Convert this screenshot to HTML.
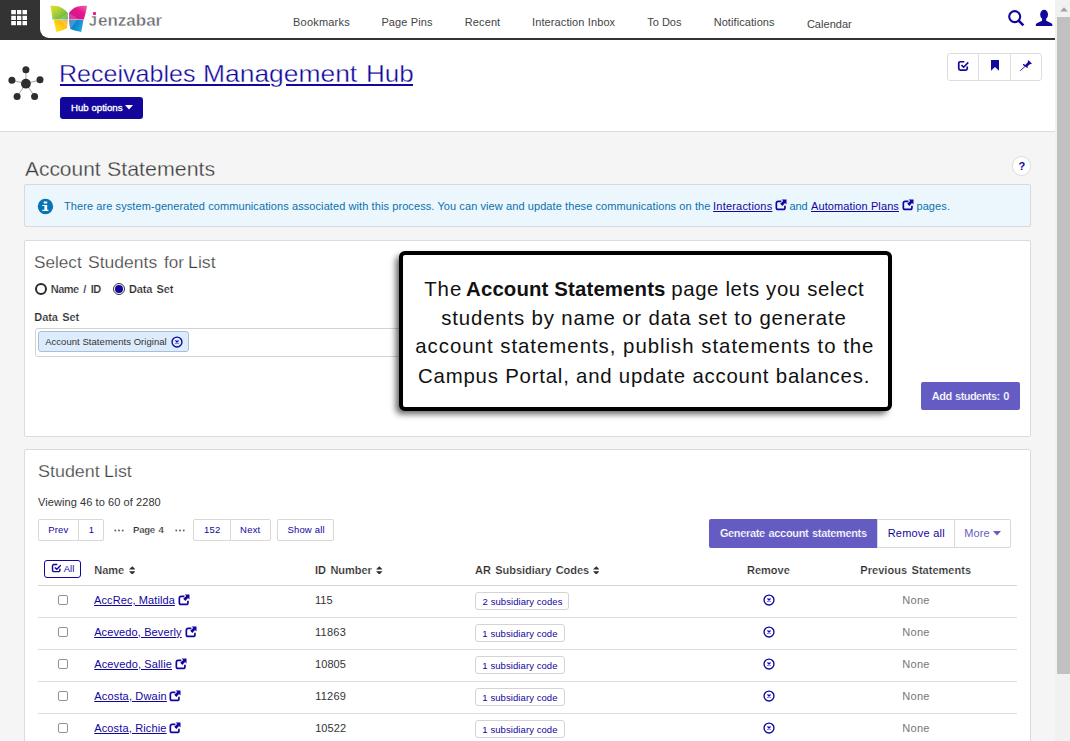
<!DOCTYPE html>
<html>
<head>
<meta charset="utf-8">
<title>Receivables Management Hub</title>
<style>
*{box-sizing:border-box;margin:0;padding:0}
html,body{width:1070px;height:741px;overflow:hidden;background:#f5f5f5;font-family:"Liberation Sans",sans-serif;color:#333}
.abs{position:absolute}
.t{position:absolute;white-space:nowrap;line-height:1}
#page{position:relative;width:1070px;height:741px;overflow:hidden;background:#f5f5f5}
#hdr{left:0;top:0;width:1055px;height:40px;background:#333}
#hdrw{left:40px;top:0;width:1015px;height:38px;background:#fff;border-bottom-left-radius:9px}
#hub{left:0;top:40px;width:1055px;height:92px;background:#fff;border-bottom:1px solid #dcdcdc}
#hubbtn{left:60px;top:97px;width:83px;height:22px;background:#12069d;border-radius:3px}
#sb{left:1055px;top:0;width:15px;height:741px;background:#f1f1f1}
#sbt{left:1057px;top:17px;width:13px;height:657px;background:#c1c1c1}
.panel{background:#fff;border:1px solid #dbdbdb;border-radius:2px}
#info{left:24px;top:184px;width:1007px;height:43px;background:#ebf7fd;border:1px solid #d9d9d9;border-radius:2px}
#p1{left:24px;top:240px;width:1007px;height:197px}
#p2{left:24px;top:449px;width:1007px;height:320px}
.btn{position:absolute;background:#fff;border:1px solid #d8d8d8}
.rowline{position:absolute;left:38px;width:979px;height:1px;background:#dedede}
.sub{position:absolute;left:475px;height:17.5px;border:1px solid #d4d4d4;border-radius:3px;background:#fff}
.cb{position:absolute;left:58px;width:9.9px;height:9.9px;border:1px solid #929292;border-radius:2px;background:#fff}
</style>
</head>
<body>
<div id="page">
<svg width="0" height="0" style="position:absolute">
<defs>
 <symbol id="ext" viewBox="0 0 12 12">
  <path d="M6.4 2.45H3.05A1.7 1.7 0 0 0 1.35 4.15V8.75A1.7 1.7 0 0 0 3.05 10.45H8.25A1.7 1.7 0 0 0 9.95 8.75V6.7" fill="none" stroke="#12069d" stroke-width="1.7"/>
  <path d="M6.6 0.5H11.5V5.4L10 3.9L7.4 6.9L5.2 4.8L8.2 2z" fill="#12069d"/>
 </symbol>
 <symbol id="xc" viewBox="0 0 12 12">
  <circle cx="6" cy="6" r="4.95" fill="none" stroke="#12069d" stroke-width="1.35"/>
  <path d="M4.5 4.5L7.5 7.5M7.5 4.5L4.5 7.5" stroke="#12069d" stroke-width="1.2"/>
 </symbol>
 <symbol id="chk" viewBox="0 0 12 11">
  <path d="M7.3 1.75H3.35A1.6 1.6 0 0 0 1.75 3.35V8.45A1.6 1.6 0 0 0 3.35 10.05H8.65A1.6 1.6 0 0 0 10.25 8.45V6.6" fill="none" stroke="#12069d" stroke-width="1.7"/>
  <path d="M4.4 5.1L6.7 7.2L11.3 2.4" fill="none" stroke="#12069d" stroke-width="1.6"/>
 </symbol>
 <symbol id="sort" viewBox="0 0 7 9">
  <path d="M3.5 0L7 3.6H0z M3.5 9L7 5.4H0z" fill="#2e2e2e"/>
 </symbol>
</defs>
</svg>

<!-- HEADER -->
<div id="hdr" class="abs"></div>
<div id="hdrw" class="abs"></div>
<svg class="abs" style="left:11px;top:10px" width="17" height="16" viewBox="0 0 17 16">
 <g fill="#fff">
 <rect x="0.2" y="0" width="4.7" height="4.3"/><rect x="6" y="0" width="4.3" height="4.3"/><rect x="11.5" y="0" width="4.5" height="4.3"/>
 <rect x="0.2" y="5.8" width="4.7" height="4.2"/><rect x="6" y="5.8" width="4.3" height="4.2"/><rect x="11.5" y="5.8" width="4.5" height="4.2"/>
 <rect x="0.2" y="11" width="4.7" height="4.2"/><rect x="6" y="11" width="4.3" height="4.2"/><rect x="11.5" y="11" width="4.5" height="4.2"/>
 </g>
</svg>
<svg class="abs" style="left:48px;top:3px" width="42" height="32" viewBox="0 0 42 32">
 <defs>
  <linearGradient id="g1" x1="0" y1="0" x2="1" y2="1"><stop offset="0" stop-color="#e6e32a"/><stop offset="0.45" stop-color="#a6ce39"/><stop offset="1" stop-color="#4aa94a"/></linearGradient>
  <linearGradient id="g2" x1="0" y1="1" x2="1" y2="0"><stop offset="0" stop-color="#c2188a"/><stop offset="0.6" stop-color="#e5168c"/><stop offset="1" stop-color="#f06ab0"/></linearGradient>
  <linearGradient id="g3" x1="1" y1="0" x2="0.1" y2="0.9"><stop offset="0" stop-color="#f59a1c"/><stop offset="0.45" stop-color="#fdc413"/><stop offset="1" stop-color="#fde61c"/></linearGradient>
  <linearGradient id="g4" x1="0" y1="0" x2="1" y2="0.4"><stop offset="0" stop-color="#2464ae"/><stop offset="0.5" stop-color="#0a88cc"/><stop offset="1" stop-color="#1ea3dc"/></linearGradient>
 </defs>
 <path d="M2.2,2.9 C5,2.6 9,3 11.6,3.8 C15,5 18,7.5 19.9,10.1 L19.9,16.4 L4.4,16.4 C4.2,12 3.4,7 2.2,2.9z" fill="url(#g1)"/>
 <path d="M39.1,2.9 C36,2.6 32,3 29.9,3.5 C26,4.6 23,7 21,10.1 L21,16.4 L35.8,16.4 C37.2,12 38.4,7 39.1,2.9z" fill="url(#g2)"/>
 <path d="M5.7,17 L19.7,17 L19.1,25.1 C16,27 12,28.3 8.4,29 C7.6,25 6.6,21 5.7,17z" fill="url(#g3)"/>
 <path d="M21,17 L35.4,17 C34.8,21 34,25 33.2,29 C29,28.2 25,27.2 22.4,26 C21.6,23 21.2,20 21,17z" fill="url(#g4)"/>
 <path d="M19.9,10.1 L19.9,16.4 L10,16.4z" fill="#fff" opacity="0.18"/>
 <path d="M21,10.1 L21,16.4 L31,16.4z" fill="#fff" opacity="0.18"/>
 <path d="M19.7,17 L19.1,25.1 L12,17z" fill="#fff" opacity="0.22"/>
 <path d="M21,17 L22.4,26 L29,17z" fill="#fff" opacity="0.22"/>
</svg>
<div class="abs" style="left:93.3px;top:12.4px;width:2.8px;height:2.5px;background:#e5168c;border-radius:1px"></div>
<svg class="abs" style="left:1007px;top:8px" width="19" height="20" viewBox="0 0 19 20">
 <circle cx="7.7" cy="8.6" r="5.5" fill="none" stroke="#12069d" stroke-width="2.1"/>
 <path d="M11.7 12.7L16.4 17.4" stroke="#12069d" stroke-width="2.6"/>
</svg>
<svg class="abs" style="left:1035px;top:9px" width="18" height="18" viewBox="0 0 18 18">
 <ellipse cx="9.1" cy="5.6" rx="3.9" ry="4.9" fill="#12069d"/>
 <path d="M7 9.5h4.2v2.2l5.2 2.6c0.6 0.3 1 0.9 1 1.6v1.1H0.8v-1.1c0-0.7 0.4-1.3 1-1.6L7 11.7z" fill="#12069d"/>
</svg>

<!-- HUB -->
<div id="hub" class="abs"></div>
<svg class="abs" style="left:6px;top:64px" width="40" height="38" viewBox="0 0 40 38">
 <g stroke="#555" stroke-width="0.55">
  <line x1="19.9" y1="19.7" x2="19.9" y2="5.7"/><line x1="19.9" y1="19.7" x2="5.9" y2="16.2"/><line x1="19.9" y1="19.7" x2="34" y2="15.8"/>
  <line x1="19.9" y1="19.7" x2="11.1" y2="32.6"/><line x1="19.9" y1="19.7" x2="28.6" y2="32.4"/>
 </g>
 <g fill="#2e2e2e">
  <circle cx="19.9" cy="19.7" r="4.9"/><circle cx="19.9" cy="5.7" r="3.5"/><circle cx="5.9" cy="16.2" r="3.5"/>
  <circle cx="34" cy="15.8" r="3.5"/><circle cx="11.1" cy="32.6" r="3.5"/><circle cx="28.6" cy="32.4" r="3.5"/>
 </g>
</svg>
<div id="hubbtn" class="abs"></div>
<div class="abs" style="left:59.8px;top:84px;width:210.2px;height:1.9px;background:#12069d"></div>
<div class="abs" style="left:286px;top:84px;width:127.2px;height:1.9px;background:#12069d"></div>
<svg class="abs" style="left:124.5px;top:104.8px" width="8" height="5" viewBox="0 0 8 5"><path d="M0 0H8L4 4.6z" fill="#fff"/></svg>
<div class="abs" style="left:947px;top:53px;width:95px;height:28px;border:1px solid #ddd;border-radius:3px;background:#fff"></div>
<div class="abs" style="left:978px;top:53px;width:1px;height:28px;background:#ddd"></div>
<div class="abs" style="left:1010px;top:53px;width:1px;height:28px;background:#ddd"></div>
<svg class="abs" style="left:956.5px;top:60px" width="12" height="11"><use href="#chk"/></svg>
<svg class="abs" style="left:990px;top:60px" width="10" height="11" viewBox="0 0 10 11"><path d="M1 0H9V10.8L5 7.1L1 10.8z" fill="#12069d"/></svg>
<svg class="abs" style="left:1019px;top:59px" width="14" height="13" viewBox="0 0 14 13">
 <path d="M1.2 11.7L7 6.6" stroke="#12069d" stroke-width="0.9"/>
 <path d="M4.1 5.4L8.8 8.5" stroke="#12069d" stroke-width="1.3"/>
 <path d="M6.2 5.9L9 3L8.7 2L9.6 1.2L12.8 4.4L12.1 5.2L11.1 5L8 7.8z" fill="#12069d"/>
</svg>

<!-- ACCOUNT STATEMENTS -->
<div class="abs" style="left:1012px;top:156px;width:18.9px;height:19.6px;border-radius:10px;border:1px solid #ddd;background:#fff"></div>
<div id="info" class="abs"></div>
<svg class="abs" style="left:37.3px;top:198.4px" width="17" height="17" viewBox="0 0 17 17"><circle cx="8.45" cy="8.5" r="7.7" fill="#0574b3"/><path d="M6.7 3.6h3.5v1.8H6.7z M5.3 6.9h4.9v4.9h1.2v1.1H5.3v-1.1h2.1V8.1H5.3z" fill="#fff"/></svg>
<svg class="abs" style="left:774.8px;top:198.5px" width="12" height="12"><use href="#ext"/></svg>
<svg class="abs" style="left:901.8px;top:198.5px" width="12" height="12"><use href="#ext"/></svg>

<!-- PANEL 1 -->
<div id="p1" class="abs panel"></div>
<div class="abs" style="left:34.8px;top:283.3px;width:11.8px;height:11.8px;border-radius:6px;border:2px solid #2b2b2b;background:#fff"></div>
<div class="abs" style="left:112.9px;top:283.3px;width:11.8px;height:11.8px;border-radius:6px;border:1.9px solid #333;background:#fff"></div>
<div class="abs" style="left:115px;top:285.4px;width:7.6px;height:7.6px;border-radius:4px;background:#12069d"></div>
<div class="abs" style="left:35px;top:327.5px;width:500px;height:29.5px;border:1px solid #d2d2d2;border-radius:3px;background:#fff"></div>
<div class="abs" style="left:38.3px;top:331px;width:150.7px;height:21px;border:1px solid #a9bfd5;border-radius:3px;background:#dcecfc"></div>
<svg class="abs" style="left:171px;top:335.9px" width="12" height="12"><use href="#xc"/></svg>
<div class="abs" style="left:921px;top:382px;width:99px;height:28px;background:#645cc3;border-radius:2px"></div>

<!-- CALLOUT -->
<div class="abs" style="left:399.2px;top:251px;width:492.8px;height:160px;border:4px solid #000;border-radius:6px;background:#fff;box-shadow:-4px 4px 6px -1px rgba(0,0,0,0.62)"></div>

<!-- PANEL 2 -->
<div id="p2" class="abs panel"></div>
<div class="btn" style="left:38px;top:519px;width:41px;height:22px;border-radius:2px 0 0 2px"></div>
<div class="btn" style="left:78px;top:519px;width:26px;height:22px;border-radius:0 2px 2px 0"></div>
<div class="btn" style="left:193px;top:519px;width:38px;height:22px;border-radius:2px 0 0 2px"></div>
<div class="btn" style="left:230px;top:519px;width:41px;height:22px;border-radius:0 2px 2px 0"></div>
<div class="btn" style="left:277px;top:519px;width:57px;height:22px;border-radius:2px"></div>
<svg class="abs" style="left:114.3px;top:528.9px" width="10" height="3" viewBox="0 0 10 3"><g fill="#666"><circle cx="1.3" cy="1.5" r="1"/><circle cx="5" cy="1.5" r="1"/><circle cx="8.7" cy="1.5" r="1"/></g></svg>
<svg class="abs" style="left:175.4px;top:528.9px" width="10" height="3" viewBox="0 0 10 3"><g fill="#666"><circle cx="1.3" cy="1.5" r="1"/><circle cx="5" cy="1.5" r="1"/><circle cx="8.7" cy="1.5" r="1"/></g></svg>
<div class="abs" style="left:709px;top:519px;width:168px;height:29px;background:#645cc3;border-radius:2px 0 0 2px"></div>
<div class="btn" style="left:877px;top:519px;width:78px;height:29px"></div>
<div class="btn" style="left:954px;top:519px;width:57px;height:29px;border-radius:0 2px 2px 0"></div>
<svg class="abs" style="left:992.5px;top:530.5px" width="8" height="5" viewBox="0 0 8 5"><path d="M0 0H8L4 4.4z" fill="#645cc3"/></svg>
<div class="abs" style="left:44px;top:560px;width:37px;height:18px;border:1.2px solid #12069d;border-radius:3px;background:#fff"></div>
<svg class="abs" style="left:51.1px;top:563.3px" width="10.4" height="9.6" viewBox="0 0 12 11"><use href="#chk"/></svg>
<svg class="abs" style="left:128.8px;top:565.6px" width="6.6" height="8.8"><use href="#sort"/></svg>
<svg class="abs" style="left:376px;top:565.6px" width="6.6" height="8.8"><use href="#sort"/></svg>
<svg class="abs" style="left:592.6px;top:565.6px" width="6.6" height="8.8"><use href="#sort"/></svg>
<div class="rowline" style="top:585px;height:1px;background:#d6d6d6"></div>
<div class="cb" style="top:595px"></div>
<svg class="abs" style="left:178.2px;top:593.5px" width="12" height="12"><use href="#ext"/></svg>
<div class="sub" style="top:592.4px;width:93.5px"></div>
<svg class="abs" style="left:763px;top:593.8px" width="12" height="12"><use href="#xc"/></svg>
<div class="rowline" style="top:617px"></div>
<div class="cb" style="top:627px"></div>
<svg class="abs" style="left:185.0px;top:625.5px" width="12" height="12"><use href="#ext"/></svg>
<div class="sub" style="top:624.4px;width:89.7px"></div>
<svg class="abs" style="left:763px;top:625.8px" width="12" height="12"><use href="#xc"/></svg>
<div class="rowline" style="top:649px"></div>
<div class="cb" style="top:659px"></div>
<svg class="abs" style="left:174.9px;top:657.5px" width="12" height="12"><use href="#ext"/></svg>
<div class="sub" style="top:656.4px;width:89.7px"></div>
<svg class="abs" style="left:763px;top:657.8px" width="12" height="12"><use href="#xc"/></svg>
<div class="rowline" style="top:681px"></div>
<div class="cb" style="top:691px"></div>
<svg class="abs" style="left:169.4px;top:689.5px" width="12" height="12"><use href="#ext"/></svg>
<div class="sub" style="top:688.4px;width:89.7px"></div>
<svg class="abs" style="left:763px;top:689.8px" width="12" height="12"><use href="#xc"/></svg>
<div class="rowline" style="top:713px"></div>
<div class="cb" style="top:723px"></div>
<svg class="abs" style="left:169.4px;top:721.5px" width="12" height="12"><use href="#ext"/></svg>
<div class="sub" style="top:720.4px;width:89.7px"></div>
<svg class="abs" style="left:763px;top:721.8px" width="12" height="12"><use href="#xc"/></svg>

<!-- TEXT -->
<div class="t" id="n1" style="left:293.04px;top:16.69px;font-size:11px;color:#444;letter-spacing:0.198px">Bookmarks</div>
<div class="t" id="n2" style="left:381.40px;top:16.69px;font-size:11px;color:#444;letter-spacing:0.124px">Page Pins</div>
<div class="t" id="n3" style="left:464.79px;top:16.69px;font-size:11px;color:#444;letter-spacing:0.104px">Recent</div>
<div class="t" id="n4" style="left:531.99px;top:16.69px;font-size:11px;color:#444;letter-spacing:0.112px">Interaction Inbox</div>
<div class="t" id="n5" style="left:647.24px;top:16.69px;font-size:11px;color:#444;letter-spacing:0.004px">To Dos</div>
<div class="t" id="n6" style="left:713.65px;top:16.69px;font-size:11px;color:#444;letter-spacing:0.083px">Notifications</div>
<div class="t" id="n7" style="left:806.89px;top:18.69px;font-size:11px;color:#444;letter-spacing:0.035px">Calendar</div>
<div class="t" id="jzJ" style="left:88.77px;top:14.47px;font-size:14.8px;color:#6b6c70;font-weight:bold;transform-origin:0 0;transform:scaleX(0.9506);-webkit-text-stroke:0.3px #fff">J</div>
<div class="t" id="jz" style="left:97.53px;top:12.78px;font-size:16.8px;color:#6b6c70;font-weight:bold;transform-origin:0 0;transform:scaleX(1.0127);-webkit-text-stroke:0.35px #fff">enzabar</div>
<div class="t" id="ti1" style="left:59.27px;top:61.68px;font-size:24px;color:#12069d;transform-origin:0 0;transform:scaleX(1.0438);-webkit-text-stroke:0.35px #fff">Receivables</div>
<div class="t" id="ti2" style="left:203.03px;top:61.68px;font-size:24px;color:#12069d;transform-origin:0 0;transform:scaleX(1.1005);-webkit-text-stroke:0.35px #fff">Management</div>
<div class="t" id="ti3" style="left:365.78px;top:61.68px;font-size:24px;color:#12069d;transform-origin:0 0;transform:scaleX(1.0850);-webkit-text-stroke:0.35px #fff">Hub</div>
<div class="t" id="hubopt" style="left:70.66px;top:104.15px;font-size:8.8px;color:#fff;transform-origin:0 0;transform:scaleX(1.0979);-webkit-text-stroke:0.3px #fff">Hub options</div>
<div class="t" id="h2a" style="left:24.70px;top:158.02px;font-size:21px;color:#3c3c3c;transform-origin:0 0;transform:scaleX(0.9962);-webkit-text-stroke:0.3px #f5f5f5">Account</div>
<div class="t" id="h2b" style="left:106.86px;top:158.02px;font-size:21px;color:#3c3c3c;transform-origin:0 0;transform:scaleX(1.0189);-webkit-text-stroke:0.3px #f5f5f5">Statements</div>
<div class="t" id="q" style="left:1018.50px;top:160.69px;font-size:11px;color:#12069d;font-weight:bold">?</div>
<div class="t" id="i1" style="left:63.98px;top:200.79px;font-size:11px;color:#0b70ae;letter-spacing:0.086px">There are system-generated communications associated with this process. You can view and update these communications on the</div>
<div class="t" id="i2" style="left:713.10px;top:200.79px;font-size:11px;color:#12069d;letter-spacing:0.200px;text-decoration:underline">Interactions</div>
<div class="t" id="i3" style="left:789.51px;top:200.79px;font-size:11px;color:#0b70ae;letter-spacing:-0.112px">and</div>
<div class="t" id="i4" style="left:810.97px;top:200.79px;font-size:11px;color:#12069d;letter-spacing:0.112px;text-decoration:underline">Automation Plans</div>
<div class="t" id="i5" style="left:916.42px;top:200.79px;font-size:11px;color:#0b70ae;letter-spacing:0.108px">pages.</div>
<div class="t" id="h3a1" style="left:34.45px;top:254.03px;font-size:16.5px;color:#3c3c3c;transform-origin:0 0;transform:scaleX(1.0403);-webkit-text-stroke:0.25px #fff">Select</div>
<div class="t" id="h3a2" style="left:88.11px;top:254.03px;font-size:16.5px;color:#3c3c3c;transform-origin:0 0;transform:scaleX(1.0628);-webkit-text-stroke:0.25px #fff">Students</div>
<div class="t" id="h3a3" style="left:163.56px;top:254.03px;font-size:16.5px;color:#3c3c3c;transform-origin:0 0;transform:scaleX(1.0343);-webkit-text-stroke:0.25px #fff">for</div>
<div class="t" id="h3a4" style="left:188.10px;top:254.03px;font-size:16.5px;color:#3c3c3c;transform-origin:0 0;transform:scaleX(1.0769);-webkit-text-stroke:0.25px #fff">List</div>
<div class="t" id="r1" style="left:50.81px;top:283.79px;font-size:11px;color:#2a2a2a;font-weight:bold;letter-spacing:-0.557px;word-spacing:2.3px;-webkit-text-stroke:0.2px #fff">Name / ID</div>
<div class="t" id="r2" style="left:128.96px;top:283.79px;font-size:11px;color:#2a2a2a;font-weight:bold;letter-spacing:-0.150px;word-spacing:1.4px;-webkit-text-stroke:0.2px #fff">Data Set</div>
<div class="t" id="ds" style="left:34.34px;top:311.89px;font-size:11px;color:#2a2a2a;font-weight:bold;letter-spacing:-0.073px;word-spacing:1.4px;-webkit-text-stroke:0.2px #fff">Data Set</div>
<div class="t" id="tag" style="left:45.15px;top:336.96px;font-size:9.5px;color:#333;letter-spacing:0.046px">Account Statements Original</div>
<div class="t" id="addst" style="left:931.85px;top:390.69px;font-size:11px;color:#fff;font-weight:bold;letter-spacing:-0.548px;word-spacing:1px;-webkit-text-stroke:0.2px #645cc3">Add students: 0</div>
<div class="t" id="co1a" style="left:424.20px;top:278.63px;font-size:20.4px;color:#111;letter-spacing:0.972px">The</div>
<div class="t" id="co1b" style="left:466.05px;top:278.63px;font-size:20.4px;color:#111;font-weight:bold;letter-spacing:0.132px">Account Statements</div>
<div class="t" id="co1c" style="left:671.17px;top:278.63px;font-size:20.4px;color:#111;letter-spacing:0.646px">page lets you select</div>
<div class="t" id="co2" style="left:441.30px;top:308.33px;font-size:20.4px;color:#111;letter-spacing:0.837px">students by name or data set to generate</div>
<div class="t" id="co3" style="left:415.24px;top:336.03px;font-size:20.4px;color:#111;letter-spacing:0.986px">account statements, publish statements to the</div>
<div class="t" id="co4" style="left:418.08px;top:366.33px;font-size:20.4px;color:#111;letter-spacing:0.785px">Campus Portal, and update account balances.</div>
<div class="t" id="h3b1" style="left:37.54px;top:463.33px;font-size:16.5px;color:#3c3c3c;transform-origin:0 0;transform:scaleX(1.0860);-webkit-text-stroke:0.25px #fff">Student</div>
<div class="t" id="h3b2" style="left:104.06px;top:463.33px;font-size:16.5px;color:#3c3c3c;transform-origin:0 0;transform:scaleX(1.0833);-webkit-text-stroke:0.25px #fff">List</div>
<div class="t" id="view" style="left:37.96px;top:497.39px;font-size:11px;color:#333;letter-spacing:0.082px">Viewing 46 to 60 of 2280</div>
<div class="t" id="pg1" style="left:48.30px;top:525.16px;font-size:9.5px;color:#12069d;letter-spacing:0.126px">Prev</div>
<div class="t" id="pg2" style="left:88.65px;top:525.16px;font-size:9.5px;color:#12069d">1</div>
<div class="t" id="pg3" style="left:133.12px;top:525.16px;font-size:9.5px;color:#2a2a2a;font-weight:bold;letter-spacing:-0.247px;word-spacing:1.4px;-webkit-text-stroke:0.2px #fff">Page 4</div>
<div class="t" id="pg4" style="left:203.90px;top:525.16px;font-size:9.5px;color:#12069d;letter-spacing:0.237px">152</div>
<div class="t" id="pg5" style="left:240.10px;top:525.16px;font-size:9.5px;color:#12069d;letter-spacing:0.204px">Next</div>
<div class="t" id="pg6" style="left:287.40px;top:525.16px;font-size:9.5px;color:#12069d;letter-spacing:0.190px">Show all</div>
<div class="t" id="gen" style="left:719.88px;top:527.69px;font-size:11px;color:#fff;font-weight:bold;letter-spacing:-0.341px;word-spacing:1px;-webkit-text-stroke:0.2px #645cc3">Generate account statements</div>
<div class="t" id="rem" style="left:887.65px;top:527.69px;font-size:11px;color:#12069d;letter-spacing:0.218px">Remove all</div>
<div class="t" id="more" style="left:964.23px;top:527.69px;font-size:11px;color:#645cc3;letter-spacing:0.072px">More</div>
<div class="t" id="all" style="left:63.75px;top:563.66px;font-size:9.5px;color:#12069d;letter-spacing:-0.004px">All</div>
<div class="t" id="th1" style="left:94.32px;top:565.49px;font-size:11px;color:#2a2a2a;font-weight:bold;letter-spacing:-0.047px;word-spacing:1.4px;-webkit-text-stroke:0.2px #fff">Name</div>
<div class="t" id="th2" style="left:315.02px;top:565.49px;font-size:11px;color:#2a2a2a;font-weight:bold;letter-spacing:-0.030px;word-spacing:1.4px;-webkit-text-stroke:0.2px #fff">ID Number</div>
<div class="t" id="th3" style="left:475.01px;top:565.49px;font-size:11px;color:#2a2a2a;font-weight:bold;letter-spacing:-0.028px;word-spacing:1.4px;-webkit-text-stroke:0.2px #fff">AR Subsidiary Codes</div>
<div class="t" id="th4" style="left:747.04px;top:565.49px;font-size:11px;color:#2a2a2a;font-weight:bold;letter-spacing:-0.007px;word-spacing:1.4px;-webkit-text-stroke:0.2px #fff">Remove</div>
<div class="t" id="th5" style="left:860.36px;top:565.49px;font-size:11px;color:#2a2a2a;font-weight:bold;letter-spacing:0.026px;word-spacing:1.4px;-webkit-text-stroke:0.2px #fff">Previous Statements</div>
<div class="t" id="nm0" style="left:94.09px;top:594.69px;font-size:11px;color:#12069d;letter-spacing:0.091px;text-decoration:underline">AccRec, Matilda</div>
<div class="t" id="id0" style="left:315.04px;top:594.69px;font-size:11px;color:#333;letter-spacing:0.032px">115</div>
<div class="t" id="sb0" style="left:482.60px;top:596.96px;font-size:9.5px;color:#12069d;letter-spacing:0.066px">2 subsidiary codes</div>
<div class="t" id="no0" style="left:902.17px;top:594.69px;font-size:11px;color:#777;letter-spacing:0.339px">None</div>
<div class="t" id="nm1" style="left:94.14px;top:626.69px;font-size:11px;color:#12069d;letter-spacing:0.122px;text-decoration:underline">Acevedo, Beverly</div>
<div class="t" id="id1" style="left:315.04px;top:626.69px;font-size:11px;color:#333;letter-spacing:0.261px">11863</div>
<div class="t" id="sb1" style="left:482.36px;top:628.96px;font-size:9.5px;color:#12069d;letter-spacing:0.076px">1 subsidiary code</div>
<div class="t" id="no1" style="left:902.17px;top:626.69px;font-size:11px;color:#777;letter-spacing:0.339px">None</div>
<div class="t" id="nm2" style="left:94.22px;top:658.69px;font-size:11px;color:#12069d;letter-spacing:0.129px;text-decoration:underline">Acevedo, Sallie</div>
<div class="t" id="id2" style="left:315.10px;top:658.69px;font-size:11px;color:#333;letter-spacing:0.043px">10805</div>
<div class="t" id="sb2" style="left:482.36px;top:660.96px;font-size:9.5px;color:#12069d;letter-spacing:0.076px">1 subsidiary code</div>
<div class="t" id="no2" style="left:902.17px;top:658.69px;font-size:11px;color:#777;letter-spacing:0.339px">None</div>
<div class="t" id="nm3" style="left:94.24px;top:690.69px;font-size:11px;color:#12069d;letter-spacing:0.174px;text-decoration:underline">Acosta, Dwain</div>
<div class="t" id="id3" style="left:315.13px;top:690.69px;font-size:11px;color:#333;letter-spacing:0.243px">11269</div>
<div class="t" id="sb3" style="left:482.36px;top:692.96px;font-size:9.5px;color:#12069d;letter-spacing:0.076px">1 subsidiary code</div>
<div class="t" id="no3" style="left:902.17px;top:690.69px;font-size:11px;color:#777;letter-spacing:0.339px">None</div>
<div class="t" id="nm4" style="left:94.24px;top:722.69px;font-size:11px;color:#12069d;letter-spacing:0.144px;text-decoration:underline">Acosta, Richie</div>
<div class="t" id="id4" style="left:315.13px;top:722.69px;font-size:11px;color:#333;letter-spacing:0.108px">10522</div>
<div class="t" id="sb4" style="left:482.36px;top:724.96px;font-size:9.5px;color:#12069d;letter-spacing:0.076px">1 subsidiary code</div>
<div class="t" id="no4" style="left:902.17px;top:722.69px;font-size:11px;color:#777;letter-spacing:0.339px">None</div>

<!-- SCROLLBAR -->
<div id="sb" class="abs"></div>
<div id="sbt" class="abs"></div>
<svg class="abs" style="left:1060px;top:7px" width="8" height="5" viewBox="0 0 8 5"><path d="M0 4.5L4 0.3L8 4.5z" fill="#a3a3a3"/></svg>
</div>
</body>
</html>
